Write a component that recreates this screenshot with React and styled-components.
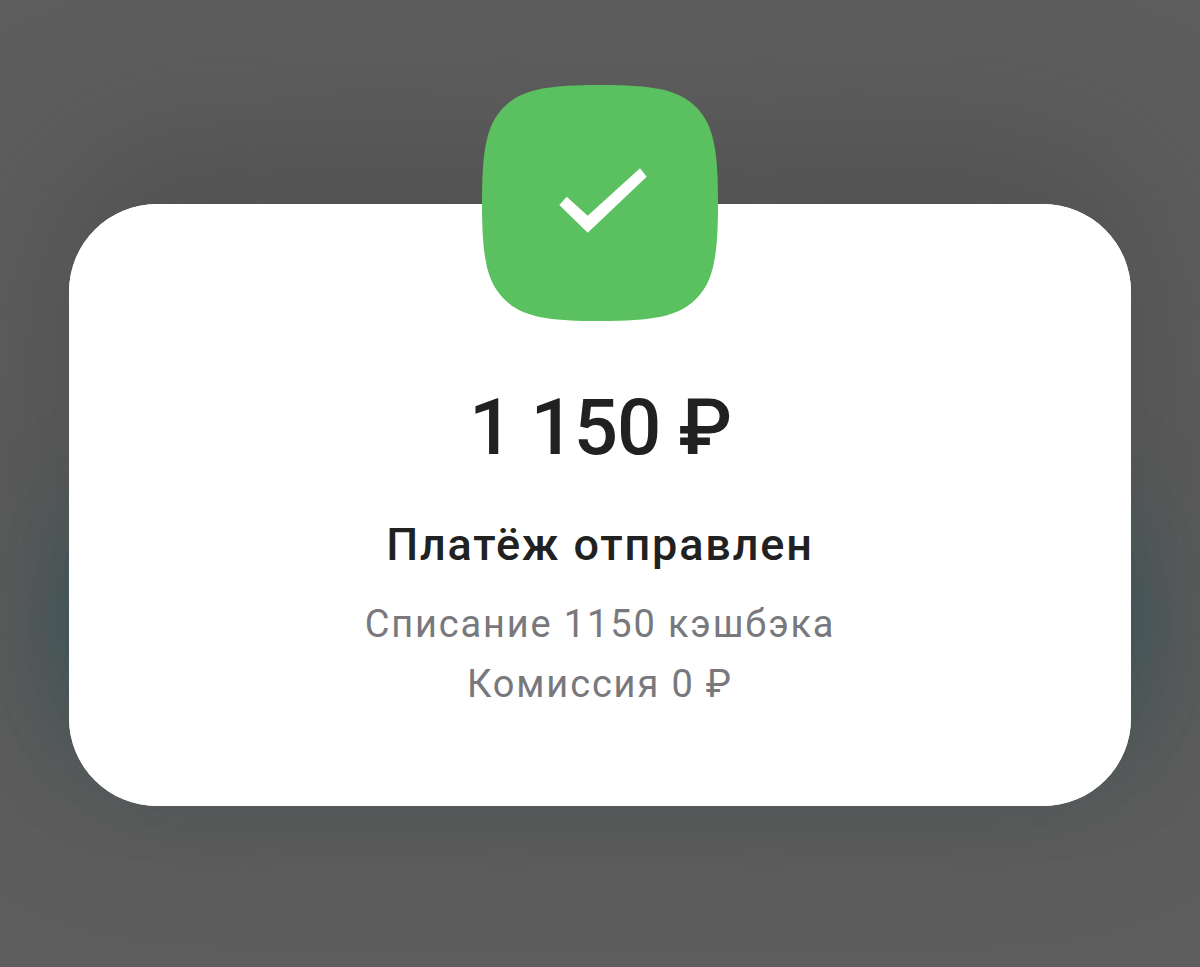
import styled, { createGlobalStyle } from "styled-components";

const GlobalStyle = createGlobalStyle`
  html, body {
    margin: 0;
    padding: 0;
    background: #5e5e5e;
  }
`;

const Page = styled.div`
  width: 1200px;
  height: 967px;
  box-sizing: border-box;
  padding: 204px 69px 0;
  overflow: hidden;
  background: #5e5e5e;
  font-family: Roboto, "Noto Sans", sans-serif;
`;

const Card = styled.section`
  position: relative;
  isolation: isolate;
  height: 602px;
  border-radius: 88px;
  background: #fff;
  display: flex;
  flex-direction: column;
  align-items: center;
  text-align: center;
  box-shadow: 0 -40px 170px rgba(50, 50, 50, 0.38);

  /* teal glow, only along the lower half of the card */
  &::before {
    content: "";
    position: absolute;
    z-index: -2;
    inset: 290px 0 50px;
    border-radius: 88px;
    box-shadow: 0 0 90px rgba(30, 85, 90, 0.6);
  }
  &::after {
    content: "";
    position: absolute;
    z-index: -1;
    inset: 0;
    border-radius: 88px;
    background: #fff;
  }
`;

const Badge = styled.svg`
  display: block;
  width: 236px;
  height: 236px;
  margin-top: -119px;
  flex: none;
`;

const Amount = styled.div`
  margin-top: 60px;
  font-size: 78px;
  line-height: 94px;
  font-weight: 500;
  letter-spacing: -1.1px;
  color: #212121;
`;

const Title = styled.div`
  margin-top: 45px;
  font-size: 45px;
  line-height: 50px;
  font-weight: 500;
  letter-spacing: 1.85px;
  color: #212121;
`;

const Notes = styled.div`
  margin-top: 24px;
`;

const Note = styled.div`
  font-size: 38px;
  line-height: 60px;
  letter-spacing: 1.85px;
  color: #78787d;
`;

export default function App() {
  return (
    <Page>
      <GlobalStyle />
      <Card>
        <Badge viewBox="0 0 236 236">
          <path
            d="M118 0C170 0 196 4 214 22C232 40 236 66 236 118C236 170 232 196 214 214C196 232 170 236 118 236C66 236 40 232 22 214C4 196 0 170 0 118C0 66 4 40 22 22C40 4 66 0 118 0Z"
            fill="#5bc05f"
          />
          <path d="M77.3 120L84.7 111.7L105.7 130.7L158 83.3L164.7 91.7L105.7 147.7Z" fill="#fff" />
        </Badge>
        <Amount>1 150 ₽</Amount>
        <Title>Платёж отправлен</Title>
        <Notes>
          <Note>Списание 1150 кэшбэка</Note>
          <Note>Комиссия 0 ₽</Note>
        </Notes>
      </Card>
    </Page>
  );
}
